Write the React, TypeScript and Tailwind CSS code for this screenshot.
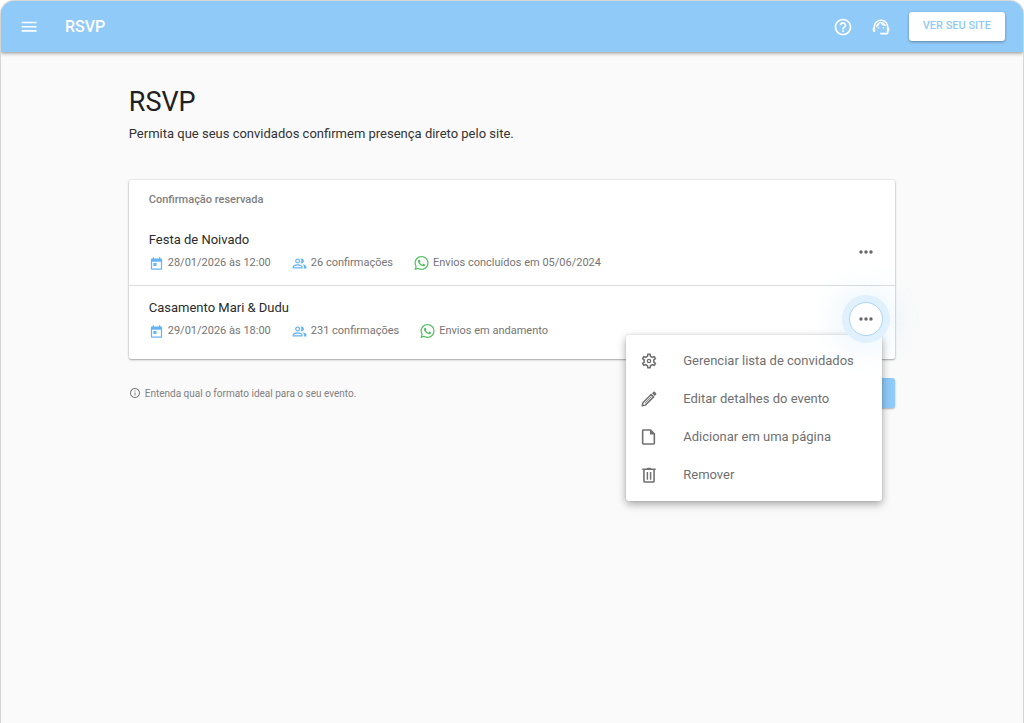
import type { ReactNode } from "react";

type IconProps = { className?: string };

function Icon({ className = "", children, viewBox = "0 0 24 24" }: IconProps & { children: ReactNode; viewBox?: string }) {
  return (
    <svg viewBox={viewBox} fill="currentColor" aria-hidden="true" className={`shrink-0 ${className}`}>
      {children}
    </svg>
  );
}

function MenuLinesIcon({ className }: IconProps) {
  return (
    <Icon className={className} viewBox="0 0 16 16">
      <path d="M0.7 2.7h14.8v1.6H0.7zM0.7 6.9h14.8v1.6H0.7zM0.7 11.1h14.8v1.6H0.7z" />
    </Icon>
  );
}

function HelpIcon({ className }: IconProps) {
  return (
    <Icon className={className}>
      <path d="M11 18h2v-2h-2v2zm1-16C6.48 2 2 6.48 2 12s4.48 10 10 10 10-4.48 10-10S17.52 2 12 2zm0 18c-4.41 0-8-3.59-8-8s3.59-8 8-8 8 3.59 8 8-3.59 8-8 8zm0-14c-2.21 0-4 1.79-4 4h2c0-1.1.9-2 2-2s2 .9 2 2c0 2-3 1.75-3 5h2c0-2.25 3-2.5 3-5 0-2.21-1.79-4-4-4z" />
    </Icon>
  );
}

function SupportIcon({ className }: IconProps) {
  return (
    <Icon className={className}>
      <path d="M21 12.22C21 6.73 16.74 3 12 3c-4.69 0-9 3.65-9 9.28-.6.34-1 .98-1 1.72v2c0 1.1.9 2 2 2h1v-6.1c0-3.87 3.13-7 7-7s7 3.13 7 7V19h-8v2h8c1.1 0 2-.9 2-2v-1.22c.59-.31 1-.92 1-1.64v-2.3c0-.7-.41-1.31-1-1.62z" />
      <circle cx="9" cy="13" r="1" />
      <circle cx="15" cy="13" r="1" />
      <path d="M18 11.03C17.52 8.18 15.04 6 12.05 6c-3.03 0-6.29 2.51-6.03 6.45 2.47-1.01 4.33-3.21 4.86-5.89 1.31 2.63 4 4.44 7.12 4.47z" />
    </Icon>
  );
}

function CalendarIcon({ className }: IconProps) {
  return (
    <Icon className={className}>
      <path d="M19 4h-1V2h-2v2H8V2H6v2H5c-1.1 0-2 .9-2 2v14c0 1.1.9 2 2 2h14c1.1 0 2-.9 2-2V6c0-1.1-.9-2-2-2zm0 16H5V9h14v11zM7 11h5v5H7z" />
    </Icon>
  );
}

function PeopleIcon({ className }: IconProps) {
  return (
    <Icon className={className}>
      <path d="M16.67 13.13C18.04 14.06 19 15.32 19 17v3h4v-3c0-2.18-3.57-3.47-6.33-3.87zM15 12c2.21 0 4-1.79 4-4s-1.79-4-4-4c-.47 0-.91.1-1.33.24C14.5 5.27 15 6.58 15 8s-.5 2.73-1.33 3.76c.42.14.86.24 1.33.24zM9 12c2.21 0 4-1.79 4-4s-1.79-4-4-4-4 1.79-4 4 1.79 4 4 4zm0-6c1.1 0 2 .9 2 2s-.9 2-2 2-2-.9-2-2 .9-2 2-2zm0 7c-2.67 0-8 1.34-8 4v3h16v-3c0-2.66-5.33-4-8-4zm6 5H3v-.99C3.2 16.29 6.3 15 9 15s5.8 1.29 6 2v1z" />
    </Icon>
  );
}

function WhatsAppIcon({ className }: IconProps) {
  return (
    <Icon className={className} viewBox="0 0 448 512">
      <path d="M380.9 97.1C339 55.1 283.2 32 223.9 32c-122.4 0-222 99.6-222 222 0 39.1 10.2 77.3 29.6 111L0 480l117.7-30.9c32.4 17.7 68.9 27 106.1 27h.1c122.3 0 224.1-99.6 224.1-222 0-59.3-25.2-115-67.1-157zm-157 341.6c-33.2 0-65.7-8.9-94-25.7l-6.7-4-69.8 18.3L72 359.2l-4.4-7c-18.5-29.4-28.2-63.3-28.2-98.2 0-101.7 82.8-184.5 184.6-184.5 49.3 0 95.6 19.2 130.4 54.1 34.8 34.9 56.2 81.2 56.1 130.5 0 101.8-84.9 184.6-186.6 184.6zm101.2-138.2c-5.5-2.8-32.8-16.2-37.9-18-5.1-1.9-8.8-2.8-12.5 2.8-3.7 5.6-14.3 18-17.6 21.8-3.2 3.7-6.5 4.2-12 1.4-32.6-16.3-54-29.1-75.5-66-5.7-9.8 5.7-9.1 16.3-30.3 1.8-3.7.9-6.9-.5-9.7-1.4-2.8-12.5-30.1-17.1-41.2-4.5-10.8-9.1-9.3-12.5-9.5-3.2-.2-6.9-.2-10.6-.2-3.7 0-9.7 1.4-14.8 6.9-5.1 5.6-19.4 19-19.4 46.3 0 27.3 19.9 53.7 22.6 57.4 2.8 3.7 39.1 59.7 94.8 83.8 35.2 15.2 49 16.5 66.6 13.9 10.7-1.6 32.8-13.4 37.4-26.4 4.6-13 4.6-24.1 3.2-26.4-1.3-2.5-5-3.9-10.5-6.6z" />
    </Icon>
  );
}

function DotsIcon({ className }: IconProps) {
  return (
    <Icon className={className} viewBox="0 0 14 4">
      <circle cx="2" cy="2" r="1.7" />
      <circle cx="7" cy="2" r="1.7" />
      <circle cx="12" cy="2" r="1.7" />
    </Icon>
  );
}

function InfoIcon({ className }: IconProps) {
  return (
    <Icon className={className}>
      <path d="M11 7h2v2h-2zm0 4h2v6h-2zm1-9C6.48 2 2 6.48 2 12s4.48 10 10 10 10-4.48 10-10S17.52 2 12 2zm0 18c-4.41 0-8-3.59-8-8s3.59-8 8-8 8 3.59 8 8-3.59 8-8 8z" />
    </Icon>
  );
}

function GearIcon({ className }: IconProps) {
  return (
    <Icon className={className}>
      <path d="M19.43 12.98c.04-.32.07-.64.07-.98 0-.34-.03-.66-.07-.98l2.11-1.65c.19-.15.24-.42.12-.64l-2-3.46c-.09-.16-.26-.25-.44-.25-.06 0-.12.01-.17.03l-2.49 1c-.52-.4-1.08-.73-1.69-.98l-.38-2.65C14.46 2.18 14.25 2 14 2h-4c-.25 0-.46.18-.49.42l-.38 2.65c-.61.25-1.17.59-1.69.98l-2.49-1c-.06-.02-.12-.03-.18-.03-.17 0-.34.09-.43.25l-2 3.46c-.13.22-.07.49.12.64l2.11 1.65c-.04.32-.07.65-.07.98 0 .33.03.66.07.98l-2.11 1.65c-.19.15-.24.42-.12.64l2 3.46c.09.16.26.25.44.25.06 0 .12-.01.17-.03l2.49-1c.52.4 1.08.73 1.69.98l.38 2.65c.03.24.24.42.49.42h4c.25 0 .46-.18.49-.42l.38-2.65c.61-.25 1.17-.59 1.69-.98l2.49 1c.06.02.12.03.18.03.17 0 .34-.09.43-.25l2-3.46c.12-.22.07-.49-.12-.64l-2.11-1.65zm-1.98-1.71c.04.31.05.52.05.73 0 .21-.02.43-.05.73l-.14 1.13.89.7 1.08.84-.7 1.21-1.27-.51-1.04-.42-.9.68c-.43.32-.84.56-1.25.73l-1.06.43-.16 1.13-.2 1.35h-1.4l-.19-1.35-.16-1.13-1.06-.43c-.43-.18-.83-.41-1.23-.71l-.91-.7-1.06.43-1.27.51-.7-1.21 1.08-.84.89-.7-.14-1.13c-.03-.31-.05-.54-.05-.74s.02-.43.05-.73l.14-1.13-.89-.7-1.08-.84.7-1.21 1.27.51 1.04.42.9-.68c.43-.32.84-.56 1.25-.73l1.06-.43.16-1.13.2-1.35h1.39l.19 1.35.16 1.13 1.06.43c.43.18.83.41 1.23.71l.91.7 1.06-.43 1.27-.51.7 1.21-1.07.85-.89.7.14 1.13z" />
      <circle cx="12" cy="12" r="2.2" fill="none" stroke="currentColor" strokeWidth="1.8" />
    </Icon>
  );
}

function PencilIcon({ className }: IconProps) {
  return (
    <Icon className={className}>
      <path d="M15.2 5.2l3.6 3.6L6.4 21.2l-4.5.9.9-4.5z" fill="none" stroke="currentColor" strokeWidth="2.2" strokeLinejoin="round" />
      <path d="M15.6 8.4L6 18" fill="none" stroke="currentColor" strokeWidth="1.2" />
      <path d="M16.6 3.3l2-2a1.4 1.4 0 0 1 2 0l2.1 2.1a1.4 1.4 0 0 1 0 2l-2 2z" />
    </Icon>
  );
}

function PageIcon({ className }: IconProps) {
  return (
    <Icon className={className}>
      <path d="M3.5 1.5h10.8l5.7 5.7v14.3a1 1 0 0 1-1 1H3.5a1 1 0 0 1-1-1v-19a1 1 0 0 1 1-1z" fill="none" stroke="currentColor" strokeWidth="2.4" strokeLinejoin="round" />
      <path d="M13.5 1.5v6.6h6.5z" />
    </Icon>
  );
}

function TrashIcon({ className }: IconProps) {
  return (
    <Icon className={className}>
      <path d="M2 2.2h6.5L9.6 1h4.8l1.1 1.2H22v2.2H2z" />
      <path d="M4.4 4v17a1.6 1.6 0 0 0 1.6 1.6h12a1.6 1.6 0 0 0 1.6-1.6V4" fill="none" stroke="currentColor" strokeWidth="2.4" />
      <path d="M9.6 7.5v11.5M14.4 7.5v11.5" fill="none" stroke="currentColor" strokeWidth="2.2" />
    </Icon>
  );
}

type Event = { title: string; date: string; confirmations: string; sending: string };

const events: Event[] = [
  { title: "Festa de Noivado", date: "28/01/2026 às 12:00", confirmations: "26 confirmações", sending: "Envios concluídos em 05/06/2024" },
  { title: "Casamento Mari & Dudu", date: "29/01/2026 às 18:00", confirmations: "231 confirmações", sending: "Envios em andamento" },
];

const actions = [
  { label: "Gerenciar lista de convidados", icon: <GearIcon className="size-[18px]" /> },
  { label: "Editar detalhes do evento", icon: <PencilIcon className="size-4" /> },
  { label: "Adicionar em uma página", icon: <PageIcon className="size-4" /> },
  { label: "Remover", icon: <TrashIcon className="size-4" /> },
];

function EventDetails({ event }: { event: Event }) {
  return (
    <div>
      <h3 className="text-[13px] leading-5 text-[#2b2b2b]">{event.title}</h3>
      <div className="mt-[3px] flex items-center gap-[21px] text-[11px] leading-5 text-[#757575]">
        <span className="flex items-center gap-1">
          <CalendarIcon className="size-[15px] text-[#64b5f6]" />
          {event.date}
        </span>
        <span className="flex items-center gap-1">
          <PeopleIcon className="size-[15px] text-[#64b5f6]" />
          {event.confirmations}
        </span>
        <span className="flex items-center gap-1">
          <WhatsAppIcon className="h-4 w-[15px] text-[#4cbf5c]" />
          {event.sending}
        </span>
      </div>
    </div>
  );
}

function ActionsMenu() {
  return (
    <div role="menu" className="w-64 rounded-[3px] bg-white py-[7px] shadow-[0_3px_8px_rgba(0,0,0,0.35),0_0_2px_rgba(0,0,0,0.12)]">
      {actions.map((action) => (
        <button key={action.label} type="button" role="menuitem" className="flex h-[38px] w-full items-center gap-6 pl-[13px] text-left text-[13px] text-[#707070]">
          <span className="flex w-5 shrink-0 justify-center">{action.icon}</span>
          <span>{action.label}</span>
        </button>
      ))}
    </div>
  );
}

export default function App() {
  return (
    <div className="min-h-screen bg-white font-[Roboto,'Liberation_Sans',sans-serif]">
      <div className="min-h-screen overflow-hidden rounded-t-[14px] border-x border-t border-[#d6d6d6] bg-[#fafafa]">
        <header className="flex h-[51px] items-center bg-[#90caf9] pr-[18px] pl-5 text-white shadow-[0_1px_4px_rgba(0,0,0,0.45)]">
          <button type="button" aria-label="Abrir menu" className="flex">
            <MenuLinesIcon className="size-4" />
          </button>
          <span className="ml-7 flex-1 text-base font-medium">RSVP</span>
          <button type="button" aria-label="Ajuda" className="flex">
            <HelpIcon className="size-5" />
          </button>
          <button type="button" aria-label="Suporte" className="ml-[18px] flex">
            <SupportIcon className="size-5" />
          </button>
          <a href="#site" className="ml-[18px] flex h-[29px] items-center rounded-[3px] bg-white px-[14px] text-[11px] font-medium text-[#90caf9] shadow-[0_1px_3px_rgba(0,0,0,0.35)]">
            VER SEU SITE
          </a>
        </header>

        <main className="mx-auto w-3/4 pt-[34px]">
          <h1 className="text-[27px] leading-8 text-[#212121]">RSVP</h1>
          <p className="mt-1.5 text-[13px] leading-5 text-[#333333]">Permita que seus convidados confirmem presença direto pelo site.</p>

          <section className="mt-9 rounded-[2px] bg-white shadow-[0_1px_2px_rgba(0,0,0,0.3),0_0_2px_rgba(0,0,0,0.2)]">
            <h2 className="px-5 pt-2.5 text-[11px] leading-5 font-medium text-[#808080]">Confirmação reservada</h2>
            <div className="flex items-center justify-between border-b border-[#dcdcdc] px-5 pt-5 pb-3">
              <EventDetails event={events[0]} />
              <button type="button" aria-label="Ações de Festa de Noivado" className="mr-0.5 flex text-[#666666]">
                <DotsIcon className="h-1 w-[14px]" />
              </button>
            </div>
            <div className="flex items-start justify-between pt-3 pr-3 pb-[18px] pl-5">
              <EventDetails event={events[1]} />
              <div className="relative pt-1">
                <button
                  type="button"
                  aria-label="Ações de Casamento Mari & Dudu"
                  aria-expanded="true"
                  className="relative z-20 flex size-[34px] items-center justify-center rounded-full border border-[#a9d5fa] bg-white text-[#666666] shadow-[0_0_0_7px_#e0f0fd,0_0_28px_16px_rgba(144,202,249,0.14)]"
                >
                  <DotsIcon className="h-1 w-[14px]" />
                </button>
                <div className="absolute top-[37px] right-px z-10">
                  <ActionsMenu />
                </div>
              </div>
            </div>
          </section>

          <div className="mt-[19px] flex items-center justify-between">
            <a href="#formatos" className="flex items-center gap-1 text-[10px] text-[#808080]">
              <InfoIcon className="size-3" />
              Entenda qual o formato ideal para o seu evento.
            </a>
            <button type="button" aria-label="Novo evento" className="h-[30px] w-28 rounded-[3px] bg-[#90caf9] shadow-[0_1px_2px_rgba(0,0,0,0.3)]" />
          </div>
        </main>
      </div>
    </div>
  );
}
